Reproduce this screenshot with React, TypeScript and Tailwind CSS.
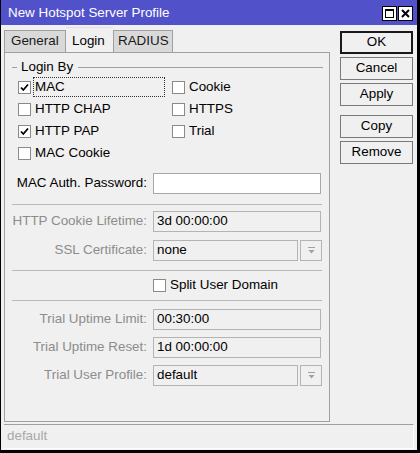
import React from "react";

const font = "font-['Liberation_Sans',Arial,sans-serif]";

function Check({ checked }: { checked?: boolean }) {
  return (
    <div className="w-[13px] h-[13px] border border-[#8a8a8a] bg-white flex items-center justify-center shrink-0">
      {checked && (
        <svg width="9" height="9" viewBox="0 0 9 9">
          <path d="M1 4.5 L3.3 7 L8 1.5" stroke="#000" strokeWidth="1.8" fill="none" />
        </svg>
      )}
    </div>
  );
}

function CheckItem({ label, checked, focus }: { label: string; checked?: boolean; focus?: boolean }) {
  return (
    <div className="flex items-center h-[22px]">
      <Check checked={checked} />
      <div
        className={
          "ml-[3px] h-[18px] flex items-center pl-[1px] " +
          (focus ? "outline outline-1 outline-dotted outline-[#333] w-[130px]" : "")
        }
      >
        {label}
      </div>
    </div>
  );
}

function DropBtn() {
  return (
    <div className="ml-[2px] w-[22px] h-[21px] border border-[#b4b4b4] flex items-center justify-center">
      <svg width="9" height="9" viewBox="0 0 9 9">
        <rect x="1" y="1" width="7" height="1" fill="#a0a0a0" />
        <path d="M1.5 4 L7.5 4 L4.5 7.5 Z" fill="#a0a0a0" />
      </svg>
    </div>
  );
}

function Row({
  label,
  value,
  enabled,
  drop,
  cls,
}: {
  label: string;
  value: string;
  enabled?: boolean;
  drop?: boolean;
  cls: string;
}) {
  return (
    <div className={"flex items-center h-[21px] " + cls}>
      <div className={"w-[142px] text-right whitespace-nowrap " + (enabled ? "text-black" : "text-[#8c8c8c]")}>{label}</div>
      <div className="ml-[6px] flex">
        <div
          className={
            "h-[21px] border flex items-center pl-[3px] " +
            (enabled ? "bg-white border-[#a8a8a8]" : "border-[#b4b4b4] bg-[#f0f0f0]") +
            (drop ? " w-[145px]" : " w-[168px]")
          }
        >
          {value}
        </div>
        {drop && <DropBtn />}
      </div>
    </div>
  );
}

function Sep({ cls }: { cls: string }) {
  return <div className={"mx-[7px] h-px bg-[#b9b9b9] " + cls} />;
}

function Btn({ label, def, cls }: { label: string; def?: boolean; cls?: string }) {
  return (
    <div
      className={
        "w-[73px] h-[23px] flex items-center justify-center " +
        (def ? "border-2 border-[#1a1a1a] " : "border border-[#7a7a7a] ") +
        (cls || "")
      }
    >
      {label}
    </div>
  );
}

export default function App() {
  return (
    <div className={"w-[420px] h-[453px] bg-black " + font + " text-[13.4px] text-black"}>
      <div className="w-[416px] h-[450px] ml-[1px] bg-[#f0f0f0] flex flex-col">
        {/* title bar */}
        <div className="h-[25px] bg-[#5151c9] flex items-center pl-[7px] pr-[4px] text-white">
          <div className="flex-1 pt-[1px]">New Hotspot Server Profile</div>
          <div className="flex gap-[1px] mt-[2px]">
            <div className="w-[15px] h-[15px] bg-white border border-black flex items-center justify-center">
              <div className="w-[9px] h-[9px] border border-black border-t-2" />
            </div>
            <div className="w-[15px] h-[15px] bg-white border border-black flex items-center justify-center">
              <svg width="9" height="9" viewBox="0 0 9 9">
                <path d="M1 1 L8 8 M8 1 L1 8" stroke="#000" strokeWidth="2" />
              </svg>
            </div>
          </div>
        </div>

        <div className="flex flex-1">
          {/* left */}
          <div className="ml-[3px] w-[326px] flex flex-col">
            <div className="flex items-end h-[27px] mt-[0px]">
              <div className="w-[62px] h-[22px] bg-[#d9d9d9] border border-[#a0a0a0] border-b-0 flex items-center pl-[6px] text-[#1a1a1a]">
                General
              </div>
              <div className="w-[47px] h-[25px] bg-[#f0f0f0] border-t border-[#e0e0e0] flex items-start pt-[3px] pl-[6px]">
                Login
              </div>
              <div className="w-[60px] h-[22px] bg-[#d9d9d9] border border-[#a0a0a0] border-b-0 flex items-center pl-[4px] text-[#1a1a1a]">
                RADIUS
              </div>
            </div>
            <div className="h-[370px] border border-[#a0a0a0] flex flex-col">
              {/* group header */}
              <div className="mt-[5px] h-[18px] flex items-center">
                <div className="ml-[7px] w-[5px] h-px bg-[#a0a0a0]" />
                <div className="ml-[4px]">Login By</div>
                <div className="ml-[5px] mr-[6px] flex-1 h-px bg-[#a0a0a0]" />
              </div>
              <div className="flex">
                <div className="ml-[13px] w-[154px] flex flex-col">
                  <CheckItem label="MAC" checked focus />
                  <CheckItem label="HTTP CHAP" />
                  <CheckItem label="HTTP PAP" checked />
                  <CheckItem label="MAC Cookie" />
                </div>
                <div className="flex flex-col">
                  <CheckItem label="Cookie" />
                  <CheckItem label="HTTPS" />
                  <CheckItem label="Trial" />
                </div>
              </div>
              <Row cls="mt-[9px]" label="MAC Auth. Password:" value="" enabled />
              <Sep cls="mt-[10px]" />
              <Row cls="mt-[6px]" label="HTTP Cookie Lifetime:" value="3d 00:00:00" />
              <Row cls="mt-[8px]" label="SSL Certificate:" value="none" drop />
              <Sep cls="mt-[9px]" />
              <div className="mt-[4px] h-[20px] flex items-center pl-[148px]">
                <Check />
                <div className="ml-[4px]">Split User Domain</div>
              </div>
              <Sep cls="mt-[5px]" />
              <Row cls="mt-[8px]" label="Trial Uptime Limit:" value="00:30:00" />
              <Row cls="mt-[7px]" label="Trial Uptime Reset:" value="1d 00:00:00" />
              <Row cls="mt-[7px]" label="Trial User Profile:" value="default" drop />
            </div>
          </div>
          {/* right buttons */}
          <div className="ml-[10px] flex flex-col pt-[6px]">
            <Btn label="OK" def />
            <Btn label="Cancel" cls="mt-[3px]" />
            <Btn label="Apply" cls="mt-[3px]" />
            <Btn label="Copy" cls="mt-[9px]" />
            <Btn label="Remove" cls="mt-[3px]" />
          </div>
        </div>

        {/* status bar */}
        <div className="mx-[3px] mb-[1px] mt-[2px] h-[25px] border-t border-[#a0a0a0] border-b border-r border-b-white border-r-white flex items-center pl-[3px] text-[#a8a8a8]">
          default
        </div>
      </div>
    </div>
  );
}
